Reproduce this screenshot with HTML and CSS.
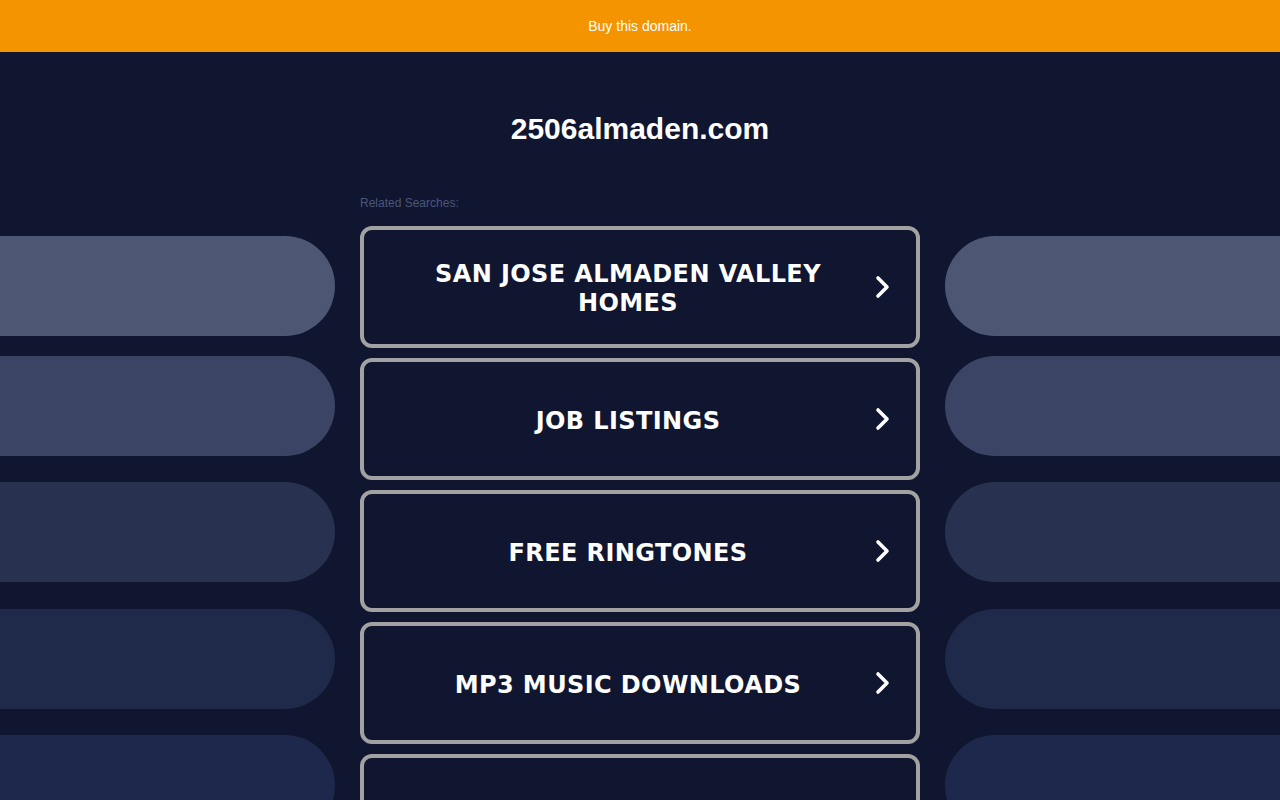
FILE: index.html
```html
<!DOCTYPE html>
<html>
<head>
<meta charset="utf-8">
<title>2506almaden.com</title>
<link rel="stylesheet" href="styles.css">
</head>
<body>
<div class="topbar">Buy this domain.</div>
<div class="header">
  <h1 class="domain">2506almaden.com</h1>
</div>
<div class="layout">
  <div class="side side-left">
    <div class="pill pill-1"></div>
    <div class="pill pill-2"></div>
    <div class="pill pill-3"></div>
    <div class="pill pill-4"></div>
    <div class="pill pill-5"></div>
  </div>
  <div class="center">
    <div class="related">Related Searches:</div>
    <div class="cards">
      <a class="card" href="#"><span class="card-text">SAN JOSE ALMADEN VALLEY HOMES</span><svg class="chev" viewBox="0 0 16 24" width="16" height="24"><polyline points="4,3 13,12 4,21" /></svg></a>
      <a class="card" href="#"><span class="card-text">JOB LISTINGS</span><svg class="chev" viewBox="0 0 16 24" width="16" height="24"><polyline points="4,3 13,12 4,21" /></svg></a>
      <a class="card" href="#"><span class="card-text">FREE RINGTONES</span><svg class="chev" viewBox="0 0 16 24" width="16" height="24"><polyline points="4,3 13,12 4,21" /></svg></a>
      <a class="card" href="#"><span class="card-text">MP3 MUSIC DOWNLOADS</span><svg class="chev" viewBox="0 0 16 24" width="16" height="24"><polyline points="4,3 13,12 4,21" /></svg></a>
      <a class="card" href="#"><span class="card-text">DATING</span><svg class="chev" viewBox="0 0 16 24" width="16" height="24"><polyline points="4,3 13,12 4,21" /></svg></a>
    </div>
  </div>
  <div class="side side-right">
    <div class="pill pill-1"></div>
    <div class="pill pill-2"></div>
    <div class="pill pill-3"></div>
    <div class="pill pill-4"></div>
    <div class="pill pill-5"></div>
  </div>
</div>
</body>
</html>
```
FILE: styles.css
```css
html, body {
  margin: 0;
  padding: 0;
  background: #101630;
  height: 800px;
  overflow: hidden;
}
body {
  font-family: "Liberation Sans", Arial, sans-serif;
  color: #ffffff;
}
.topbar {
  height: 52px;
  background: #f39400;
  color: #ffffff;
  font-size: 14px;
  line-height: 52px;
  text-align: center;
}
.header {
  padding-top: 59px;
  text-align: center;
}
.domain {
  margin: 0;
  font-size: 30px;
  line-height: 36px;
  font-weight: bold;
  color: #ffffff;
}
.layout {
  display: grid;
  grid-template-columns: 335px 560px 335px;
  column-gap: 25px;
  margin-top: 48px;
}
.related {
  font-size: 12px;
  line-height: 16px;
  color: #4b5679;
  margin-bottom: 15px;
}
.cards {
  display: flex;
  flex-direction: column;
  gap: 10px;
}
.card {
  box-sizing: border-box;
  height: 122px;
  border: 4px solid #a2a2a2;
  border-radius: 12px;
  display: flex;
  align-items: center;
  padding: 0 26px 0 18px;
  text-decoration: none;
  color: #ffffff;
}
.card-text {
  flex: 1;
  text-align: center;
  padding: 4px 44px 0;
  font-family: "DejaVu Sans", Verdana, sans-serif;
  font-weight: bold;
  font-size: 24px;
  line-height: 29px;
  letter-spacing: 0.4px;
}
.chev {
  flex: none;
  fill: none;
  stroke: #ffffff;
  stroke-width: 3.6;
  stroke-linecap: round;
  stroke-linejoin: round;
}
.side {
  display: flex;
  flex-direction: column;
  padding-top: 41px;
}
.pill {
  height: 100px;
  flex: none;
}
.side-left .pill {
  border-radius: 0 50px 50px 0;
}
.side-right .pill {
  border-radius: 50px 0 0 50px;
}
.pill-1 { background: #4d5774; }
.pill-2 { background: #3b4464; margin-top: 20px; }
.pill-3 { background: #283150; margin-top: 26px; }
.pill-4 { background: #1f2a4b; margin-top: 27px; }
.pill-5 { background: #1d284c; margin-top: 26px; }
```
